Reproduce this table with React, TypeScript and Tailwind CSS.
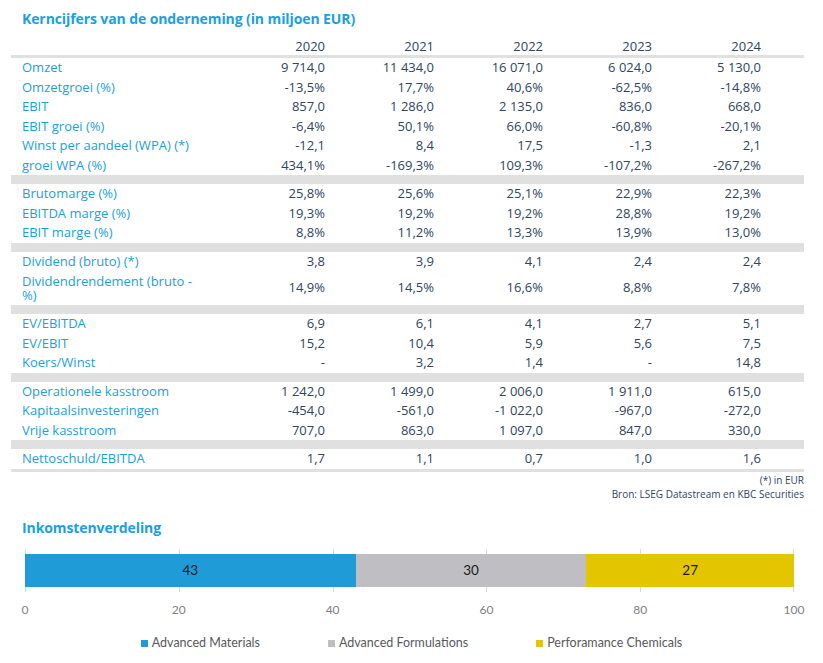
import React from "react";

type Row = { label: string; values: string[]; tall?: boolean };

const years = ["2020", "2021", "2022", "2023", "2024"];

// sections are separated by a grey band
const sections: Row[][] = [
  [
    { label: "Omzet", values: ["9 714,0", "11 434,0", "16 071,0", "6 024,0", "5 130,0"] },
    { label: "Omzetgroei (%)", values: ["-13,5%", "17,7%", "40,6%", "-62,5%", "-14,8%"] },
    { label: "EBIT", values: ["857,0", "1 286,0", "2 135,0", "836,0", "668,0"] },
    { label: "EBIT groei (%)", values: ["-6,4%", "50,1%", "66,0%", "-60,8%", "-20,1%"] },
    { label: "Winst per aandeel (WPA) (*)", values: ["-12,1", "8,4", "17,5", "-1,3", "2,1"] },
    { label: "groei WPA (%)", values: ["434,1%", "-169,3%", "109,3%", "-107,2%", "-267,2%"] },
  ],
  [
    { label: "Brutomarge (%)", values: ["25,8%", "25,6%", "25,1%", "22,9%", "22,3%"] },
    { label: "EBITDA marge (%)", values: ["19,3%", "19,2%", "19,2%", "28,8%", "19,2%"] },
    { label: "EBIT marge (%)", values: ["8,8%", "11,2%", "13,3%", "13,9%", "13,0%"] },
  ],
  [
    { label: "Dividend (bruto) (*)", values: ["3,8", "3,9", "4,1", "2,4", "2,4"] },
    { label: "Dividendrendement (bruto - %)", values: ["14,9%", "14,5%", "16,6%", "8,8%", "7,8%"], tall: true },
  ],
  [
    { label: "EV/EBITDA", values: ["6,9", "6,1", "4,1", "2,7", "5,1"] },
    { label: "EV/EBIT", values: ["15,2", "10,4", "5,9", "5,6", "7,5"] },
    { label: "Koers/Winst", values: ["-", "3,2", "1,4", "-", "14,8"] },
  ],
  [
    { label: "Operationele kasstroom", values: ["1 242,0", "1 499,0", "2 006,0", "1 911,0", "615,0"] },
    { label: "Kapitaalsinvesteringen", values: ["-454,0", "-561,0", "-1 022,0", "-967,0", "-272,0"] },
    { label: "Vrije kasstroom", values: ["707,0", "863,0", "1 097,0", "847,0", "330,0"] },
  ],
  [
    { label: "Nettoschuld/EBITDA", values: ["1,7", "1,1", "0,7", "1,0", "1,6"] },
  ],
];

const segments = [
  { name: "Advanced Materials", value: 43, color: "bg-[#1f9bd7]" },
  { name: "Advanced Formulations", value: 30, color: "bg-[#bfbfc3]" },
  { name: "Perforamance Chemicals", value: 27, color: "bg-[#e3c600]" },
];

const ticks = [0, 20, 40, 60, 80, 100];

function TableRow({ row }: { row: Row }) {
  return (
    <div
      className={
        "grid grid-cols-[205px_repeat(5,109px)_1fr] items-center " +
        (row.tall ? "h-[34px]" : "h-[19.5px]")
      }
    >
      <div className={"pl-[11px] text-[#1a9fe0] " + (row.tall ? "w-[190px] leading-[14px]" : "")}>
        {row.label}
      </div>
      {row.values.map((v, i) => (
        <div key={i} className="text-right text-[#2f4560]">
          {v}
        </div>
      ))}
      <div />
    </div>
  );
}

export default function App() {
  return (
    <div className="w-[823px] h-[663px] bg-white font-['Open_Sans',sans-serif] text-[13px]">
      <div className="mx-[11px] w-[793px]">
        {/* title */}
        <div className="pt-[8px] pl-[11px] h-[37px] text-[14px] font-bold text-[#1a9fe0] tracking-[-0.1px]">
          Kerncijfers van de onderneming (in miljoen EUR)
        </div>

        {/* header */}
        <div className="grid grid-cols-[205px_repeat(5,109px)_1fr] items-center h-[18px] text-[#2f4560]">
          <div />
          {years.map((y) => (
            <div key={y} className="text-right">
              {y}
            </div>
          ))}
          <div />
        </div>
        <div className="h-[3px] bg-[#e0e0e0]" />

        {sections.map((rows, si) => (
          <div key={si}>
            {si > 0 && <div className="h-[9px] bg-[#e0e0e0]" />}
            {rows.map((r) => (
              <TableRow key={r.label} row={r} />
            ))}
          </div>
        ))}
        <div className="h-[3px] bg-[#e0e0e0]" />

        {/* footnotes */}
        <div className="flex flex-col items-end pt-[1px] text-[10px] leading-[14px] text-[#2f4560]">
          <div>(*) in EUR</div>
          <div>Bron: LSEG Datastream en KBC Securities</div>
        </div>

        {/* chart title */}
        <div className="pt-[16px] pl-[11px] text-[14px] font-bold text-[#1a9fe0] tracking-[-0.1px]">
          Inkomstenverdeling
        </div>
      </div>

      {/* chart */}
      <div className="font-['Lato',sans-serif]">
        <div className="relative ml-[25px] w-[769px] mt-[11px] py-[5px]">
          {ticks.map((t) => (
            <div
              key={t}
              className="absolute top-0 bottom-0 w-px bg-[#d9d9d9]"
              style={{ left: `${t}%`, marginLeft: t === 100 ? -1 : 0 }}
            />
          ))}
          <div className="relative flex h-[33px]">
            {segments.map((s) => (
              <div
                key={s.name}
                className={"flex items-center justify-center text-[13.5px] text-[#1a1a1a] " + s.color}
                style={{ width: `${s.value}%` }}
              >
                {s.value}
              </div>
            ))}
          </div>
        </div>
        <div className="relative ml-[25px] w-[769px] h-[27px]">
          {ticks.map((t) => (
            <div
              key={t}
              className="absolute top-[9px] -translate-x-1/2 text-[12px] text-[#7f7f7f]"
              style={{ left: `${t}%` }}
            >
              {t}
            </div>
          ))}
        </div>
        <div className="flex justify-center gap-[68px] pt-[15px] text-[12.5px] text-[#595959]">
          {segments.map((s) => (
            <div key={s.name} className="flex items-center gap-[4px]">
              <span className="inline-block w-[7px] h-[7px] mt-px" >
                <span className={"block w-full h-full " + s.color} />
              </span>
              <span>{s.name}</span>
            </div>
          ))}
        </div>
      </div>
    </div>
  );
}
